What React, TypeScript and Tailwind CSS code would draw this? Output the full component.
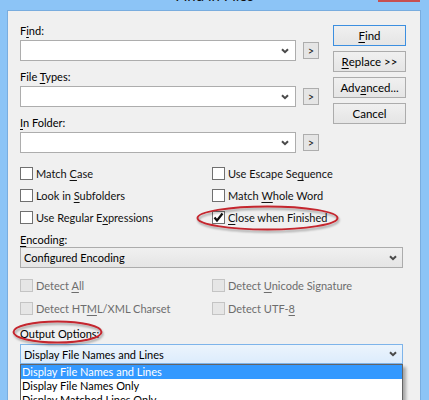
import React from "react";

const font = "font-['Lato','Liberation_Sans',sans-serif]";

// one letter of the label gets the mnemonic underline
const Mnemonic = ({ text, at }: { text: string; at: number }) => (
  <>
    {text.slice(0, at)}
    <span className="underline decoration-1 underline-offset-[2px]">
      {text.charAt(at)}
    </span>
    {text.slice(at + 1)}
  </>
);

const Chevron = () => (
  <svg width="8" height="6" viewBox="0 0 8 6" className="shrink-0">
    <path d="M1 1.2 L4 4.2 L7 1.2" fill="none" stroke="#4a4a4a" strokeWidth="2" />
  </svg>
);

const EditCombo = () => (
  <div className="flex h-[21px] w-[276px] items-center justify-end border border-[#adadad] bg-white pr-[6px]">
    <Chevron />
  </div>
);

const ArrowButton = () => (
  <div className="flex h-[17px] w-[16px] items-center justify-center border border-[#adadad] bg-[#e5e5e5] text-[11px] leading-none text-[#222]">
    &gt;
  </div>
);

type Field = { label: string; at: number };

const fields: Field[] = [
  { label: "Find:", at: 1 },
  { label: "File Types:", at: 5 },
  { label: "In Folder:", at: 0 },
];

const buttons = [
  { label: "Find", at: 0, primary: true },
  { label: "Replace >>", at: 0 },
  { label: "Advanced...", at: 3 },
  { label: "Cancel", at: -1 },
];

type Check = { label: string; at: number; checked?: boolean };

const options: Check[] = [
  { label: "Match Case", at: 6 },
  { label: "Use Escape Sequence", at: 13 },
  { label: "Look in Subfolders", at: 8 },
  { label: "Match Whole Word", at: 6 },
  { label: "Use Regular Expressions", at: 13 },
  { label: "Close when Finished", at: 0, checked: true },
];

const detects: Check[] = [
  { label: "Detect All", at: 7 },
  { label: "Detect Unicode Signature", at: 7 },
  { label: "Detect HTML/XML Charset", at: 9 },
  { label: "Detect UTF-8", at: 11 },
];

const CheckBox = ({ item, disabled }: { item: Check; disabled?: boolean }) => (
  <div className="flex items-center gap-[3px]">
    <div
      className={
        disabled
          ? "h-[13px] w-[13px] border border-[#c4c4c4] bg-[#e6e6e6]"
          : "flex h-[13px] w-[13px] items-center justify-center border border-[#707070] bg-white"
      }
    >
      {item.checked && (
        <svg width="11" height="11" viewBox="0 0 11 11">
          <path d="M1.5 5.5 L4 8.5 L9.5 1.5" fill="none" stroke="#111" strokeWidth="2.2" />
        </svg>
      )}
    </div>
    <span className={disabled ? "text-[#6d6d6d]" : "text-[#111]"}>
      <Mnemonic text={item.label} at={item.at} />
    </span>
  </div>
);

const outputChoices = [
  "Display File Names and Lines",
  "Display File Names Only",
  "Display Matched Lines Only",
];

export default function App() {
  return (
    <div
      className={`relative h-[400px] w-[429px] overflow-hidden bg-[#8cc4f6] text-[11px] leading-[15px] text-black ${font}`}
    >
      {/* title bar, mostly scrolled off the top */}
      <div className="flex h-[10px] justify-center overflow-hidden">
        <span className="-mt-[12px] text-[15px] leading-[15px] text-[#111]">
          Find in Files
        </span>
      </div>
      <div className="absolute right-[9px] top-0 h-[2px] w-[42px] bg-[#c75050]" />

      <div className="ml-[7px] h-[400px] w-[414px] border-x border-t border-[#79addf] bg-[#f0f0f0] pl-[12px] pt-[12px]">
        <div className="flex gap-[14px]">
          <div className="flex w-[299px] flex-col gap-[8px]">
            {fields.map((f) => (
              <div key={f.label}>
                <div className="mb-[2px] h-[15px]">
                  <Mnemonic text={f.label} at={f.at} />
                </div>
                <div className="flex items-center gap-[7px]">
                  <EditCombo />
                  <ArrowButton />
                </div>
              </div>
            ))}
          </div>
          <div className="mt-[2px] flex flex-col gap-[5px]">
            {buttons.map((b) => (
              <div
                key={b.label}
                className={`flex h-[21px] w-[73px] items-center justify-center bg-gradient-to-b from-[#f0f0f0] to-[#e5e5e5] text-[11.5px] ${
                  b.primary ? "border border-[#3c8fe0]" : "border border-[#acacac]"
                }`}
              >
                {b.at < 0 ? b.label : <Mnemonic text={b.label} at={b.at} />}
              </div>
            ))}
          </div>
        </div>

        <div className="mt-[9px] grid grid-cols-[192px_1fr] auto-rows-[22px] items-center">
          {options.map((o) => (
            <CheckBox key={o.label} item={o} />
          ))}
        </div>

        <div className="mt-[4px] h-[15px]">
          <Mnemonic text="Encoding:" at={0} />
        </div>
        <div className="flex h-[21px] w-[383px] items-center justify-between border border-[#acacac] bg-gradient-to-b from-[#f0f0f0] to-[#e5e5e5] pl-[3px] pr-[5px]">
          <span>Configured Encoding</span>
          <Chevron />
        </div>

        <div className="mt-[6px] grid grid-cols-[192px_1fr] auto-rows-[23px] items-center">
          {detects.map((d) => (
            <CheckBox key={d.label} item={d} disabled />
          ))}
        </div>

        <div className="mt-[6px] h-[15px]">
          <Mnemonic text="Output Options:" at={1} />
        </div>
        <div className="mt-[3px] flex h-[20px] w-[383px] items-center justify-between border border-[#7eb4ea] bg-gradient-to-b from-[#ecf4fc] to-[#dcecfc] pl-[3px] pr-[5px]">
          <span>Display File Names and Lines</span>
          <Chevron />
        </div>
        <div className="w-[383px] border border-[#646464] bg-white shadow-[3px_3px_3px_rgba(0,0,0,0.3)]">
          {outputChoices.map((c, i) => (
            <div
              key={c}
              className={`h-[14px] pl-[1px] leading-[14px] ${
                i === 0 ? "bg-[#3399ff] text-white" : "text-black"
              }`}
            >
              {c}
            </div>
          ))}
        </div>
      </div>

      {/* red hand-drawn highlights */}
      <svg className="pointer-events-none absolute left-0 top-0" width="429" height="400">
        <defs>
          <filter id="shade" x="-10%" y="-30%" width="130%" height="180%">
            <feDropShadow dx="1" dy="2" stdDeviation="1.2" floodColor="#000" floodOpacity="0.35" />
          </filter>
        </defs>
        <ellipse cx="267.5" cy="218" rx="70" ry="11.5" fill="none" stroke="#c4262e" strokeWidth="2" filter="url(#shade)" />
        <ellipse cx="57.5" cy="332" rx="44" ry="10.5" fill="none" stroke="#c4262e" strokeWidth="2" filter="url(#shade)" />
      </svg>
    </div>
  );
}
